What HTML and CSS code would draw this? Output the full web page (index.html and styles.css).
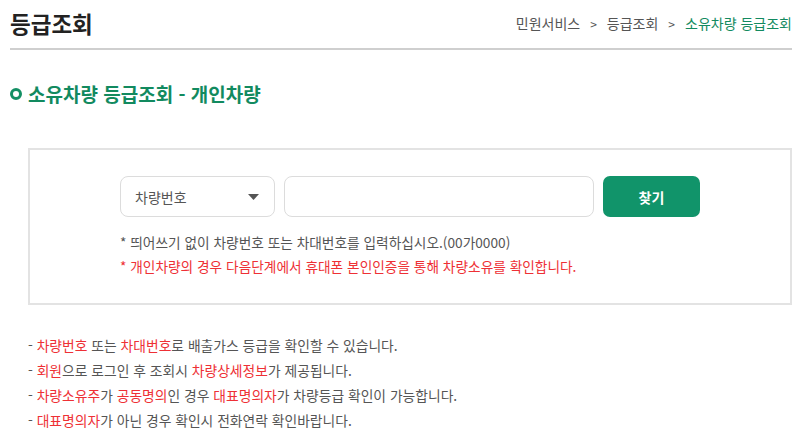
FILE: index.html
```html
<!DOCTYPE html>
<html lang="ko">
<head>
<meta charset="utf-8">
<title>등급조회</title>
<link rel="stylesheet" href="styles.css">
</head>
<body>
<div class="page">
  <header class="top">
    <h1 class="title">등급조회</h1>
    <nav class="crumbs">
      <span>민원서비스</span><span class="sep">&gt;</span><span>등급조회</span><span class="sep">&gt;</span><span class="current">소유차량 등급조회</span>
    </nav>
  </header>

  <h2 class="section"><span class="ring"></span>소유차량 등급조회 - 개인차량</h2>

  <div class="box">
    <div class="inner">
      <div class="row">
        <div class="select">
          <span>차량번호</span>
          <svg class="caret" width="11" height="6" viewBox="0 0 11 6"><path d="M0 0H11L5.5 6Z" fill="#555"/></svg>
        </div>
        <div class="input"></div>
        <button class="btn">찾기</button>
      </div>
      <p class="note">* 띄어쓰기 없이 차량번호 또는 차대번호를 입력하십시오.(00가0000)</p>
      <p class="note red">* 개인차량의 경우 다음단계에서 휴대폰 본인인증을 통해 차량소유를 확인합니다.</p>
    </div>
  </div>

  <ul class="info">
    <li>- <em>차량번호</em> 또는 <em>차대번호</em>로 배출가스 등급을 확인할 수 있습니다.</li>
    <li>- <em>회원</em>으로 로그인 후 조회시 <em>차량상세정보</em>가 제공됩니다.</li>
    <li>- <em>차량소유주</em>가 <em>공동명의</em>인 경우 <em>대표명의자</em>가 차량등급 확인이 가능합니다.</li>
    <li>- <em>대표명의자</em>가 아닌 경우 확인시 전화연락 확인바랍니다.</li>
  </ul>
</div>
</body>
</html>
```

FILE: styles.css
```css
* { box-sizing: border-box; }
html, body { margin: 0; padding: 0; background: #fff; }
body {
  font-family: "Noto Sans CJK KR", "Noto Sans", sans-serif;
  color: #555;
}
.page { padding: 0 8px 0 10px; }

.top {
  display: flex;
  justify-content: space-between;
  align-items: center;
  height: 50px;
  border-bottom: 2px solid #cfcfcf;
}
.title {
  margin: 0;
  font-size: 22.5px;
  font-weight: 700;
  color: #222;
  padding-bottom: 2px;
}
.crumbs {
  font-size: 14px;
  color: #555;
  padding-bottom: 2px;
}
.crumbs .sep { padding: 0 10px; font-size: 12px; }
.crumbs .current { color: #138a60; }

.section {
  display: flex;
  align-items: center;
  margin: 31px 0 0;
  font-size: 19px;
  font-weight: 700;
  color: #128a5f;
  line-height: 26px;
}
.ring {
  width: 12px;
  height: 12px;
  border: 3px solid #138f64;
  border-radius: 50%;
  margin-right: 6px;
}

.box {
  margin: 41px 0 0 18px;
  height: 157px;
  border: 2px solid #e3e3e3;
  display: flex;
  justify-content: center;
}
.inner { width: 580px; padding-top: 26px; }
.row { display: flex; gap: 9px; height: 41px; }
.select {
  width: 155px;
  border: 1px solid #dcdcdc;
  border-radius: 8px;
  display: flex;
  align-items: center;
  justify-content: space-between;
  padding: 0 15px 0 14px;
  font-size: 14px;
  color: #555;
}
.input {
  width: 310px;
  border: 1px solid #dcdcdc;
  border-radius: 8px;
}
.btn {
  width: 97px;
  border: 0;
  border-radius: 7px;
  background: #11946a;
  color: #fff;
  font-family: inherit;
  font-size: 14px;
  font-weight: 700;
}
.note {
  margin: 0;
  font-size: 13.7px;
  line-height: 24px;
  color: #555;
}
.note:first-of-type { margin-top: 13px; }
.note.red { color: #ee3035; }

.info {
  list-style: none;
  margin: 28px 0 0 18px;
  padding: 0;
  font-size: 13.8px;
  line-height: 25px;
  color: #555;
}
.info em { font-style: normal; color: #ee3035; }
```
